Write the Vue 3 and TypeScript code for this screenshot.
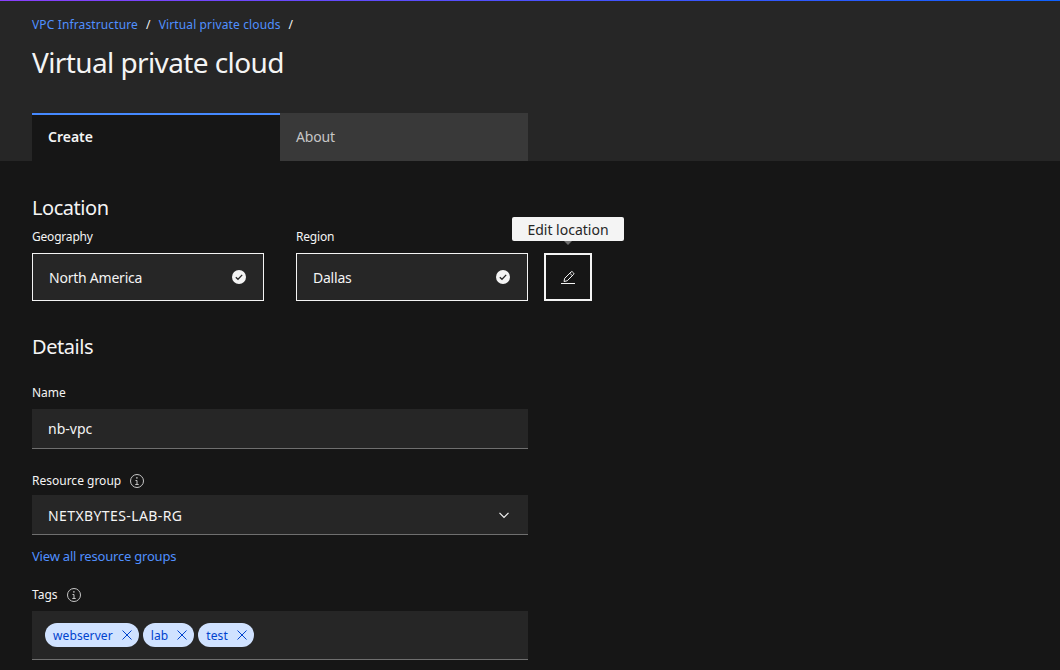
<template>
  <div class="page">
    <header class="page-header">
      <nav class="breadcrumb">
        <a class="crumb">VPC Infrastructure</a>
        <span class="sep">/</span>
        <a class="crumb">Virtual private clouds</a>
        <span class="sep">/</span>
      </nav>
      <h1 class="title">Virtual private cloud</h1>
      <div class="tabs">
        <div class="tab active">Create</div>
        <div class="tab">About</div>
      </div>
    </header>

    <main class="content">
      <h2 class="section-title location-title">Location</h2>
      <div class="location-row">
        <div v-for="tile in tiles" :key="tile.label" class="location-field">
          <div class="label">{{ tile.label }}</div>
          <div class="tile">
            <span>{{ tile.value }}</span>
            <svg class="check" viewBox="0 0 16 16" width="16" height="16">
              <circle cx="8" cy="8" r="7" fill="#f4f4f4" />
              <path d="M4.8 8.2 7 10.3l4.2-4.4" fill="none" stroke="#262626" stroke-width="1.3" />
            </svg>
          </div>
        </div>
        <div class="edit-wrap">
          <div class="tooltip">Edit location</div>
          <button class="edit-btn" type="button" aria-label="Edit location">
            <svg viewBox="0 0 16 16" width="16" height="16" fill="none" stroke="#f4f4f4" stroke-width="1">
              <path d="M1 14.5h14" />
              <path d="M4 12.5l.7-3.2L11 3a1.1 1.1 0 0 1 1.6 0l.9.9a1.1 1.1 0 0 1 0 1.6l-6.3 6.3z" />
              <path d="M9.8 4.2l2.5 2.5" />
            </svg>
          </button>
        </div>
      </div>

      <h2 class="section-title details-title">Details</h2>

      <div class="label name-label">Name</div>
      <div class="input">nb-vpc</div>

      <div class="label with-icon group-label">
        Resource group
        <svg class="info" viewBox="0 0 16 16" width="16" height="16" fill="none" stroke="#c6c6c6">
          <circle cx="8" cy="8" r="6.5" />
          <path d="M6.5 7.5H8v4M6.3 11.5h3.4" />
          <circle cx="7.9" cy="4.9" r=".8" fill="#c6c6c6" stroke="none" />
        </svg>
      </div>
      <div class="input select">
        <span class="select-value">NETXBYTES-LAB-RG</span>
        <svg viewBox="0 0 16 16" width="16" height="16" fill="none" stroke="#f4f4f4" stroke-width="1.2">
          <path d="M3.5 5.8 8 10.3l4.5-4.5" />
        </svg>
      </div>
      <a class="view-all">View all resource groups</a>

      <div class="label with-icon tags-label">
        Tags
        <svg class="info" viewBox="0 0 16 16" width="16" height="16" fill="none" stroke="#c6c6c6">
          <circle cx="8" cy="8" r="6.5" />
          <path d="M6.5 7.5H8v4M6.3 11.5h3.4" />
          <circle cx="7.9" cy="4.9" r=".8" fill="#c6c6c6" stroke="none" />
        </svg>
      </div>
      <div class="input tags">
        <span v-for="tag in tags" :key="tag" class="tag">
          {{ tag }}
          <svg viewBox="0 0 16 16" width="16" height="16" fill="none" stroke="#0043ce" stroke-width="1">
            <path d="M3.5 3.5l9 9M12.5 3.5l-9 9" />
          </svg>
        </span>
      </div>
    </main>
  </div>
</template>

<script setup lang="ts">
const tiles = [
  { label: 'Geography', value: 'North America' },
  { label: 'Region', value: 'Dallas' },
]

const tags = ['webserver', 'lab', 'test']
</script>

<style>
html,
body {
  background: #161616;
}
</style>

<style scoped>
.page {
  height: 670px;
  overflow: hidden;
  background: #161616;
  color: #f4f4f4;
  font-family: "Noto Sans", "Open Sans", sans-serif;
}

.page-header {
  height: 161px;
  box-sizing: border-box;
  padding: 1px 32px 0;
  display: flex;
  flex-direction: column;
  background: linear-gradient(90deg, #8a3ffc, #0f62fe) top / 100% 1px no-repeat, #262626;
}

.breadcrumb {
  display: flex;
  align-items: center;
  height: 16px;
  margin-top: 15px;
  font-size: 12px;
  letter-spacing: 0.13px;
}

.crumb,
.view-all {
  color: #5090ff;
}

.sep {
  margin: 0 8px;
  color: #f4f4f4;
}

.title {
  margin: 12px 0 0;
  font-size: 28px;
  line-height: 36px;
  font-weight: 400;
  letter-spacing: -0.6px;
}

.tabs {
  display: flex;
  margin-top: auto;
}

.tab {
  width: 248px;
  height: 48px;
  box-sizing: border-box;
  padding: 0 16px 2px;
  display: flex;
  align-items: center;
  background: #393939;
  color: #c6c6c6;
  font-size: 14px;
  letter-spacing: -0.2px;
}

.tab.active {
  padding-bottom: 4px;
  background: #161616;
  border-top: 2px solid #4589ff;
  color: #f4f4f4;
  font-weight: 600;
  letter-spacing: 0;
}

.content {
  padding: 33px 32px 0;
  width: 496px;
}

.section-title {
  margin: 0;
  font-size: 20px;
  line-height: 28px;
  font-weight: 400;
  letter-spacing: -0.45px;
}

.label {
  font-size: 12px;
  line-height: 16px;
  color: #f4f4f4;
}

.location-row {
  display: flex;
  gap: 32px;
  margin-top: 7px;
}

.location-field .label {
  margin-bottom: 8px;
  letter-spacing: -0.2px;
}

.tile {
  width: 232px;
  height: 48px;
  box-sizing: border-box;
  padding: 0 16px;
  display: flex;
  align-items: center;
  justify-content: space-between;
  background: #262626;
  border: 1px solid #f4f4f4;
  font-size: 14px;
  letter-spacing: -0.23px;
}

.edit-wrap {
  position: relative;
  align-self: flex-end;
  margin-left: -16px;
}

.edit-btn {
  display: flex;
  align-items: center;
  justify-content: center;
  width: 48px;
  height: 48px;
  padding: 0;
  background: #161616;
  border: 2px solid #f4f4f4;
}

.tooltip {
  position: absolute;
  left: -32px;
  top: -36px;
  width: 112px;
  height: 24px;
  display: flex;
  align-items: center;
  justify-content: center;
  border-radius: 2px;
  background: #f4f4f4;
  color: #262626;
  font-size: 14px;
}

.tooltip::after {
  content: "";
  position: absolute;
  left: 50%;
  bottom: -4px;
  margin-left: -4px;
  border-left: 4px solid transparent;
  border-right: 4px solid transparent;
  border-top: 4px solid #6f6f6f;
}

.details-title {
  margin-top: 32px;
}

.name-label {
  margin-top: 24px;
}

.input {
  width: 496px;
  height: 40px;
  margin-top: 8px;
  box-sizing: border-box;
  padding: 0 16px;
  display: flex;
  align-items: center;
  background: #262626;
  border-bottom: 1px solid #6f6f6f;
  font-size: 14px;
}

.select {
  justify-content: space-between;
  margin-top: 6px;
}

.select-value {
  margin-top: 2px;
  letter-spacing: 0.4px;
}

.with-icon {
  display: flex;
  align-items: center;
  gap: 8px;
}

.group-label {
  margin-top: 24px;
}

.view-all {
  display: block;
  margin-top: 12px;
  font-size: 13px;
  line-height: 18px;
  letter-spacing: -0.2px;
}

.tags-label {
  margin-top: 22px;
}

.tags {
  height: 49px;
  padding: 0 13px;
  gap: 4px;
}

.tag {
  height: 24px;
  padding: 0 4px 0 8px;
  display: flex;
  align-items: center;
  gap: 6px;
  border-radius: 12px;
  background: #d0e2ff;
  color: #0043ce;
  font-size: 12px;
  letter-spacing: 0.1px;
}
</style>
